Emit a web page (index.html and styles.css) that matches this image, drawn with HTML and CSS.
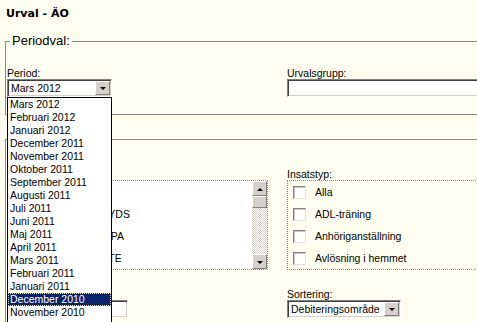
FILE: index.html
```html
<!DOCTYPE html>
<html lang="sv">
<head>
    <meta charset="UTF-8">
    <meta name="viewport" content="width=device-width, initial-scale=1.0">
    <title>Urval - ÄO</title>
    <link rel="stylesheet" href="styles.css">
</head>
<body>
    <h1 class="title">Urval - ÄO</h1>

    <fieldset class="group period">
        <legend>Periodval:</legend>
        <div class="cols">
            <div class="field">
                <label>Period:</label>
                <div class="combo">
                    <div class="select">
                        <span class="select-text">Mars 2012</span>
                        <span class="drop-btn"></span>
                    </div>
                    <ul class="drop-list">
                        <li>Mars 2012</li>
                        <li>Februari 2012</li>
                        <li>Januari 2012</li>
                        <li>December 2011</li>
                        <li>November 2011</li>
                        <li>Oktober 2011</li>
                        <li>September 2011</li>
                        <li>Augusti 2011</li>
                        <li>Juli 2011</li>
                        <li>Juni 2011</li>
                        <li>Maj 2011</li>
                        <li>April 2011</li>
                        <li>Mars 2011</li>
                        <li>Februari 2011</li>
                        <li>Januari 2011</li>
                        <li class="selected">December 2010</li>
                        <li>November 2010</li>
                    </ul>
                </div>
            </div>
            <div class="field">
                <label>Urvalsgrupp:</label>
                <input class="text-input wide" type="text">
            </div>
        </div>
    </fieldset>

    <fieldset class="group criteria">
        <legend>Urval:</legend>
        <div class="cols">
            <div class="field">
                <label>Område:</label>
                <div class="listbox white">
                    <div class="items">
                        <div class="opt"><input type="checkbox"><span>Alla</span></div>
                        <div class="opt"><input type="checkbox"><span>Hemtjänst Norr YDS</span></div>
                        <div class="opt"><input type="checkbox"><span>Hemtjänst Nord PA</span></div>
                        <div class="opt"><input type="checkbox"><span>Hemtjänst Norr TE</span></div>
                    </div>
                    <div class="scrollbar">
                        <span class="sb-btn up"></span>
                        <span class="sb-thumb"></span>
                        <span class="sb-track"></span>
                        <span class="sb-btn down"></span>
                    </div>
                </div>
            </div>
            <div class="field">
                <label>Insatstyp:</label>
                <div class="listbox">
                    <div class="items">
                        <div class="opt"><input type="checkbox"><span>Alla</span></div>
                        <div class="opt"><input type="checkbox"><span>ADL-träning</span></div>
                        <div class="opt"><input type="checkbox"><span>Anhöriganställning</span></div>
                        <div class="opt"><input type="checkbox"><span>Avlösning i hemmet</span></div>
                    </div>
                </div>
            </div>
            <div class="field">
                <label>Kund:</label>
                <input class="text-input short" type="text">
            </div>
            <div class="field">
                <label>Sortering:</label>
                <div class="select sort">
                    <span class="select-text">Debiteringsområde</span>
                    <span class="drop-btn"></span>
                </div>
            </div>
        </div>
    </fieldset>
</body>
</html>
```

FILE: styles.css
```css
html, body {
    overflow: hidden;
}

body {
    margin: 0;
    background-color: #fefef0;
    font-family: "Liberation Sans", Arial, sans-serif;
    font-size: 10.5px;
    color: #000;
}

.title {
    margin: 0;
    padding: 7px 6px 0;
    font-family: "DejaVu Sans", Verdana, sans-serif;
    font-size: 11px;
    line-height: 14px;
    font-weight: bold;
}

.group {
    margin: 0 0 0 5px;
    padding: 0 1px;
    border: 1px solid #888;
}

.group legend {
    margin-left: 3px;
    padding: 0 2px;
    font-size: 13px;
    line-height: 14px;
}

.period {
    margin-top: 13px;
    padding-top: 19px;
    padding-bottom: 17px;
}

.criteria {
    margin-top: 17px;
    padding-top: 22px;
    padding-bottom: 20px;
}

.cols {
    display: grid;
    grid-template-columns: 261px 261px;
    column-gap: 19px;
    row-gap: 18px;
}

.field label {
    display: block;
    line-height: 12px;
}

/* combo boxes */

.combo {
    position: relative;
    width: 105px;
}

.select {
    display: flex;
    align-items: center;
    box-sizing: border-box;
    height: 18px;
    background: #fff;
    border: 1px solid;
    border-color: #808080 #fff #fff #808080;
    box-shadow: inset 1px 1px #404040, inset -1px -1px #d4d0c8;
    padding: 1px 1px 1px 3px;
}

.select-text {
    flex: 1;
    line-height: 14px;
    white-space: nowrap;
}

.drop-btn {
    position: relative;
    box-sizing: border-box;
    width: 15px;
    height: 14px;
    background: #d4d0c8;
    border: 1px solid;
    border-color: #fff #808080 #808080 #fff;
}

.drop-btn::after,
.sb-btn::after {
    content: "";
    position: absolute;
    left: 50%;
    top: 50%;
    margin: -1px 0 0 -3px;
    border-left: 3px solid transparent;
    border-right: 3px solid transparent;
    border-top: 3px solid #000;
}

.drop-list {
    position: absolute;
    z-index: 10;
    left: 0;
    top: 18px;
    width: 105px;
    box-sizing: border-box;
    margin: 0;
    padding: 0 0 6px;
    list-style: none;
    background: #fff;
    border: 1px solid #000;
}

.drop-list li {
    height: 13px;
    line-height: 13px;
    padding-left: 2px;
    white-space: nowrap;
}

.drop-list .selected {
    background: #0a246a;
    color: #fff;
    outline: 1px dotted #e8e4a0;
    outline-offset: -1px;
}

.sort {
    width: 114px;
}

.text-input {
    display: block;
    box-sizing: border-box;
    height: 18px;
    margin: 0;
    background: #fff;
    border: 1px solid;
    border-color: #808080 #fff #fff #808080;
    box-shadow: inset 1px 1px #404040, inset -1px -1px #d4d0c8;
}

.wide {
    width: 261px;
}

.short {
    width: 121px;
}

/* check lists */

.listbox {
    display: flex;
    box-sizing: border-box;
    height: 90px;
    border: 1px dotted #8a8a8a;
}

.listbox.white {
    background: #fff;
}

.items {
    flex: 1;
}

.opt {
    display: flex;
    align-items: center;
    height: 22px;
    padding-left: 5px;
    white-space: nowrap;
}

.opt input {
    appearance: none;
    box-sizing: border-box;
    width: 13px;
    height: 13px;
    margin: 0 9px 0 0;
    background: #fff;
    border: 1px solid;
    border-color: #808080 #e4e4e4 #e4e4e4 #808080;
    box-shadow: inset 1px 1px #c8c8c8;
}

.scrollbar {
    display: flex;
    flex-direction: column;
    width: 15px;
    background-color: #fff;
    background-image: repeating-conic-gradient(#d4d0c8 0 25%, #fff 0 50%);
    background-size: 2px 2px;
}

.sb-btn,
.sb-thumb {
    position: relative;
    box-sizing: border-box;
    height: 15px;
    background: #d4d0c8;
    border: 1px solid;
    border-color: #fff #808080 #808080 #fff;
}

.sb-btn.up::after {
    border-top: 0;
    border-bottom: 3px solid #000;
}

.sb-thumb {
    height: 12px;
}

.sb-track {
    flex: 1;
}
```
